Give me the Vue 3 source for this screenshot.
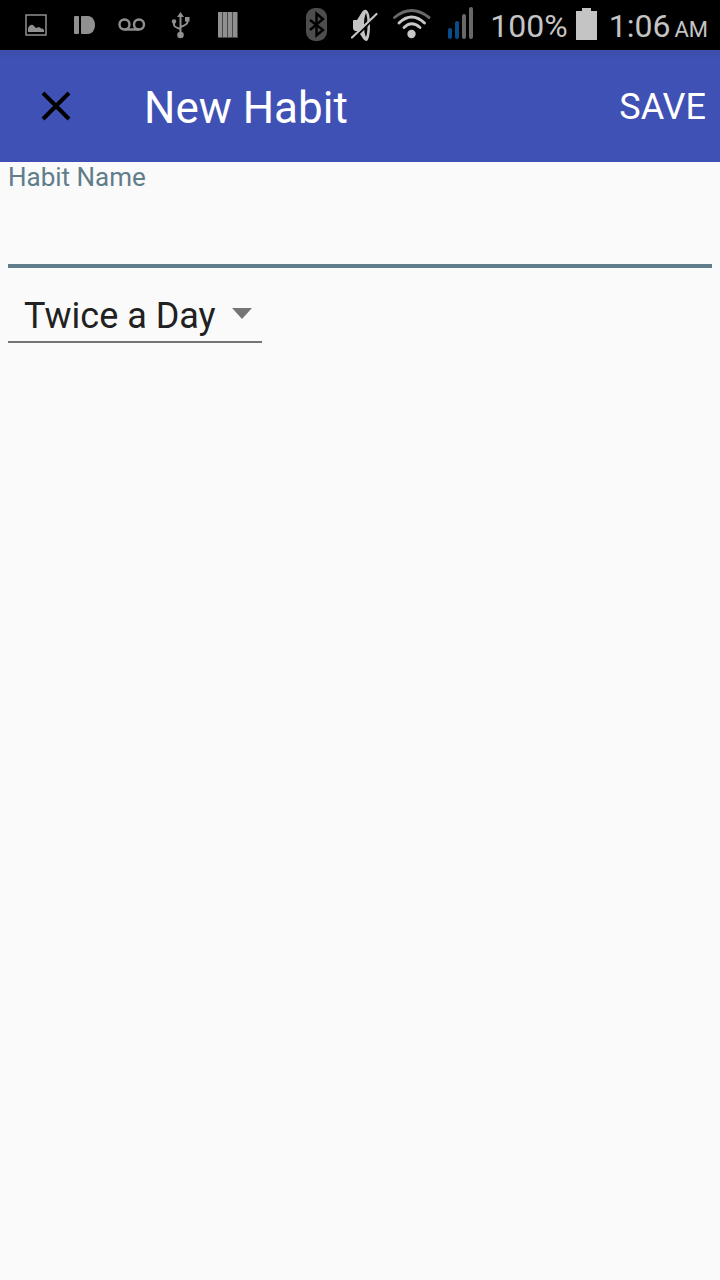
<script setup>
import { ref } from 'vue'

const habitName = ref('')
const frequency = ref('Twice a Day')
const options = ['Twice a Day']
</script>

<template>
  <div class="screen">
    <div class="status">
      <div class="group">
        <svg class="cell" viewBox="0 0 48 50" aria-hidden="true">
          <rect x="14" y="15" width="20" height="20" fill="none" stroke="#909090" stroke-width="1.5" />
          <path d="M16 32V28Q18 24 21 25L24 28L27 27L30 29V28L32 30V32Z" fill="#909090" />
        </svg>
        <svg class="cell" viewBox="0 0 48 50" aria-hidden="true">
          <rect x="14" y="16" width="5" height="18" rx="1" fill="#909090" />
          <path d="M22 16H28C32 16 35 20 35 25S32 34 28 34H22Q21 34 21 33V17Q21 16 22 16Z" fill="#909090" />
        </svg>
        <svg class="cell" viewBox="0 0 48 50" aria-hidden="true">
          <g fill="none" stroke="#909090" stroke-width="2.4">
            <circle cx="16.5" cy="24.5" r="5" />
            <circle cx="31" cy="24.5" r="5" />
            <path d="M16.5 29.5H31" />
          </g>
        </svg>
        <svg class="cell" viewBox="0 0 48 50" aria-hidden="true">
          <g fill="none" stroke="#909090" stroke-width="2">
            <path d="M24.5 15V35M18 22V25Q18 27 24.5 29M31.5 19V22Q31.5 24.5 24.5 27" />
          </g>
          <path d="M24.5 12L28 17H21Z" fill="#909090" />
          <circle cx="24.5" cy="35" r="3.3" fill="#909090" />
          <circle cx="18" cy="21.5" r="2.2" fill="#909090" />
          <rect x="29" y="17" width="4.5" height="4.5" fill="#909090" />
        </svg>
        <svg class="cell" viewBox="0 0 48 50" aria-hidden="true">
          <rect x="14" y="12" width="20" height="26" fill="#484848" />
          <path d="M14 12h4v25h-4zM19 12h4v25h-4zM24 12h4v25h-4zM29 12h4v25h-4z" fill="#909090" />
        </svg>
      </div>
      <div class="group end">
        <svg class="cell" viewBox="0 0 48 50" aria-hidden="true">
          <rect x="14" y="8" width="21" height="33" rx="9" fill="#4d4d4d" />
          <path d="M18 20L31 30L24.5 35.5V13.5L31 19L18 30" fill="none" stroke="#000" stroke-width="2.4" />
        </svg>
        <svg class="cell" viewBox="0 0 48 50" aria-hidden="true">
          <path d="M13 21Q13 20 14 20H17L22 12Q24 9 26.5 10Q30 12 30 25Q30 38 27 41Q24 41 22 37L18 31H15Q13 30 13 28Z" fill="#c4c4c4" />
          <path d="M26 13Q24 17 24 25T26 37Q27.5 33 27.5 25T26 13Z" fill="#000" />
          <path d="M13 39.5L37 15.5" stroke="#000" stroke-width="2" />
          <path d="M12 37.5L36.5 14" stroke="#c4c4c4" stroke-width="2.2" stroke-linecap="round" />
        </svg>
        <svg class="cell" viewBox="0 0 48 50" aria-hidden="true">
          <g fill="none" stroke="#c8c8c8" stroke-width="2.9" stroke-linecap="round">
            <path d="M6.5 17.5Q23.5 3.5 41 17.5" stroke="#686868" />
            <path d="M11 23Q23.5 11 36.5 23M16 27.5Q23.5 20 32 27.5" />
          </g>
          <circle cx="23.5" cy="34" r="4.2" fill="#c8c8c8" />
        </svg>
        <svg class="cell" viewBox="0 0 48 50" aria-hidden="true">
          <path d="M14 30V37M21 23V37" stroke="#084d88" stroke-width="4" stroke-linecap="round" />
          <path d="M28 16V37M35 9V37" stroke="#686868" stroke-width="4" stroke-linecap="round" />
        </svg>
        <span class="percent">100%</span>
        <svg class="battery" viewBox="0 0 21 50" aria-hidden="true">
          <path d="M0 11H6V8H15V11H21V40H0Z" fill="#c4c4c4" />
        </svg>
        <span class="clock">1:06</span>
        <span class="meridiem">AM</span>
      </div>
    </div>

    <header class="bar">
      <button class="close" type="button" aria-label="Close">
        <svg viewBox="0 0 48 48" aria-hidden="true">
          <path d="M11 11L37 37M37 11L11 37" stroke="#000" stroke-width="4" />
        </svg>
      </button>
      <h1>New Habit</h1>
      <button class="save" type="submit" form="habit">SAVE</button>
    </header>

    <form id="habit" class="form" @submit.prevent>
      <label for="name">Habit Name</label>
      <input id="name" v-model="habitName" type="text" />
      <div class="spinner">
        <select v-model="frequency" aria-label="Frequency">
          <option v-for="o in options" :key="o">{{ o }}</option>
        </select>
        <svg class="arrow" viewBox="0 0 20 11" aria-hidden="true">
          <path d="M0 0H20L10 11Z" fill="#757575" />
        </svg>
      </div>
    </form>
  </div>
</template>

<style>
body {
  background: #fafafa;
}
</style>

<style scoped>
.screen {
  min-height: 100vh;
  background: #fafafa;
  font-family: Roboto, sans-serif;
}
.status {
  display: flex;
  justify-content: space-between;
  height: 50px;
  padding: 0 12px;
  background: #000;
  color: #c4c4c4;
}
.group {
  display: flex;
  align-items: center;
}
.end {
  align-items: baseline;
  line-height: 52px;
}
.cell {
  width: 48px;
  height: 50px;
  align-self: flex-start;
}
.battery {
  width: 21px;
  height: 50px;
  margin: 0 12px 0 8px;
  align-self: flex-start;
}
.percent,
.clock {
  font-size: 32px;
}
.percent {
  margin-left: 6px;
}
.meridiem {
  margin-left: 4px;
  font-size: 22px;
}
.bar {
  display: flex;
  align-items: center;
  height: 112px;
  background: linear-gradient(#3c4ca9, #3f51b5 10px);
  color: #fff;
}
button {
  border: 0;
  padding: 0;
  background: none;
  color: inherit;
  font-family: inherit;
}
.close {
  width: 112px;
  height: 112px;
}
.close svg {
  display: block;
  width: 48px;
  height: 48px;
  margin: 0 auto;
}
h1 {
  flex: 1;
  margin: 0 0 0 32px;
  padding-top: 4px;
  font-size: 44px;
  font-weight: 400;
  line-height: 52px;
}
.save {
  height: 112px;
  padding: 2px 14px 0;
  font-size: 36px;
  font-weight: 400;
}
.form {
  padding: 0 8px;
}
label {
  display: block;
  color: #607d8b;
  font-size: 26px;
  line-height: 30px;
}
input {
  display: block;
  box-sizing: border-box;
  width: 100%;
  height: 76px;
  padding: 0;
  border: 0;
  border-bottom: 4px solid #607d8b;
  border-radius: 0;
  background: none;
  color: #212121;
  font: 36px Roboto, sans-serif;
  outline: none;
}
.spinner {
  display: inline-flex;
  position: relative;
  margin-top: 20px;
  border-bottom: 2px solid #757575;
}
select {
  appearance: none;
  height: 53px;
  border: 0;
  padding: 2px 46px 0 16px;
  background: none;
  color: #212121;
  font: 36px Roboto, sans-serif;
}
.arrow {
  position: absolute;
  right: 10px;
  top: 20px;
  width: 20px;
  height: 11px;
  pointer-events: none;
}
</style>
